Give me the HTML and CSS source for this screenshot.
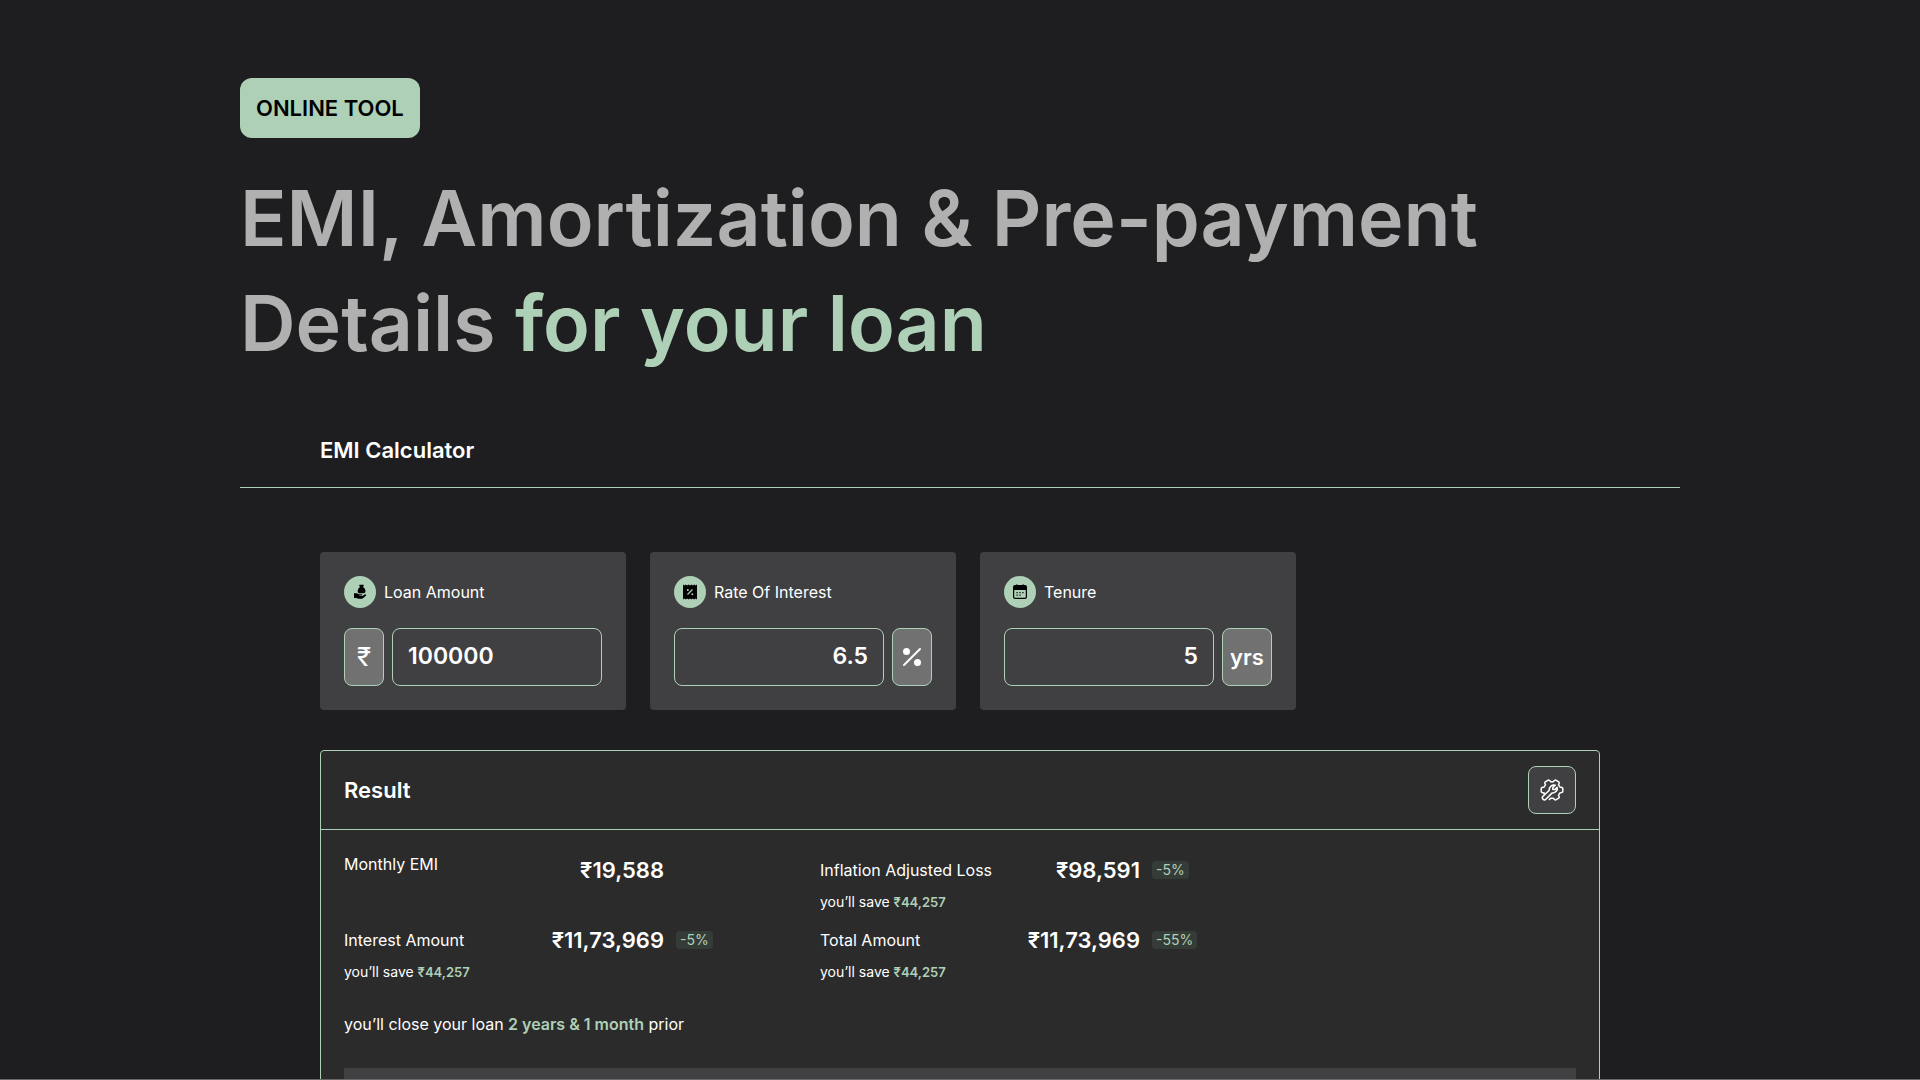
FILE: index.html
```html
<!DOCTYPE html>
<html lang="en">
<head>
  <meta charset="UTF-8">
  <meta name="viewport" content="width=device-width, initial-scale=1.0">
  <title>EMI Calculator</title>
  <link rel="stylesheet" href="styles.css">
</head>
<body>
  <main class="page">
    <header class="hero">
      <span class="tag">ONLINE TOOL</span>
      <h1>EMI, Amortization &amp; Pre-payment Details <em>for your loan</em></h1>
    </header>

    <nav class="tabs">
      <a href="#calculator" class="tab">EMI Calculator</a>
    </nav>

    <section class="calculator" id="calculator">
      <form class="inputs">
        <div class="card">
          <label class="card-label" for="amount">
            <span class="icon">
              <svg width="16" height="16" viewBox="0 0 16 16">
                <path d="M7.3.8h4.4v1.3l-.8 1c1.7 1 2.6 2.5 2.6 4 0 1.400-.9 2.200-2.300 2.200H7.800C6.600 9.300 5.700 8.500 5.700 7.200c0-1.600.9-3.100 2.400-4.100l-.8-1z"/>
                <path d="M2 9.200h2.600c1 0 1.600.8 2.600 1.100h2.300c.9 0 .9 1.100 0 1.100H7.300v.5h2.900l2.500-1.500c1-.6 1.900.4 1.200 1.300l-3 2.500c-.4.400-.9.600-1.500.6H7.300c-1.300 0-2-.9-3.200-.9H2z"/>
              </svg>
            </span>
            Loan Amount
          </label>
          <div class="field">
            <span class="unit rupee">₹</span>
            <input type="text" id="amount" value="100000">
          </div>
        </div>

        <div class="card">
          <label class="card-label" for="rate">
            <span class="icon">
              <svg width="16" height="16" viewBox="0 0 16 16">
                <path d="M1 .5l1.400 1L3.800.5l1.400 1L6.600.5 8 1.500 9.400.5l1.400 1L12.200.5l1.400 1L15 .5v15l-1.400-1-1.400 1-1.400-1-1.400 1L8 14.500l-1.400 1-1.400-1-1.400 1-1.400-1-1.400 1z"/>
                <path class="icon-line" d="M5.500 10.500l5-5"/>
                <circle class="icon-dot" cx="5.800" cy="5.900" r="1"/>
                <circle class="icon-dot" cx="10.300" cy="10.200" r="1"/>
              </svg>
            </span>
            Rate Of Interest
          </label>
          <div class="field">
            <input type="text" id="rate" class="right" value="6.5">
            <span class="unit">
              <svg width="20" height="20" viewBox="0 0 20 20">
                <path class="percent-line" d="M2 18L18 2"/>
                <circle cx="4.500" cy="4.500" r="3.500"/>
                <circle cx="15.500" cy="15.500" r="3.500"/>
              </svg>
            </span>
          </div>
        </div>

        <div class="card">
          <label class="card-label" for="tenure">
            <span class="icon">
              <svg width="16" height="16" viewBox="0 0 16 16">
                <path fill-rule="evenodd" d="M3 1h1V.5h1.500V1h5V.5H12V1h1a2 2 0 0 1 2 2v9.500a2.500 2.500 0 0 1-2.500 2.500h-9A2.500 2.500 0 0 1 1 12.500V3a2 2 0 0 1 2-2zM2.200 6v6.500c0 .7.600 1.300 1.300 1.300h9c.7 0 1.300-.6 1.300-1.300V6z"/>
                <path d="M4.500 8h1.200v1.200H4.500zM7.400 8h1.200v1.200H7.400zM10.300 8h1.200v1.200h-1.200zM4.500 10.600h1.200v1.200H4.500zM7.400 10.600h1.200v1.200H7.400z"/>
              </svg>
            </span>
            Tenure
          </label>
          <div class="field">
            <input type="text" id="tenure" class="right" value="5">
            <span class="unit wide">yrs</span>
          </div>
        </div>
      </form>

      <section class="result">
        <div class="result-head">
          <h2>Result</h2>
          <button type="button" class="settings" aria-label="Settings">
            <svg width="24" height="24" viewBox="0 0 24 24">
              <path d="M4 16.500L4.200 15 Q1.200 14.600 1.200 13.500V10.500Q1.200 9.500 4.200 9L5.500 6.700Q4.200 4.500 5.300 3.800L8.200 2.100Q9.200 1.800 10.700 3.700H13.300Q14.800 1.800 15.800 2.100L18.700 3.800Q19.800 4.500 18.500 6.700L19.800 9Q22.800 9.500 22.800 10.500V13.500Q22.800 14.500 19.800 15L18.500 17.300Q19.800 19.500 18.700 20.200L15.800 21.900Q14.800 22.200 13.300 20.300H10.700L9 21.900"/>
              <path d="M9.300 12.200A4.700 4.700 0 0 1 15.300 7.200L12.800 9.400v2h2.200L17.200 9.200A4.600 4.600 0 0 1 12.200 14.900L5.900 21.200a2 2 0 0 1-2.900-2.900z"/>
            </svg>
          </button>
        </div>

        <div class="result-body">
          <div class="stats">
            <div class="stat">
              <span class="stat-label top">Monthly EMI</span>
              <strong class="stat-value">₹19,588</strong>
            </div>
            <div class="stat">
              <span class="stat-label">Inflation Adjusted Loss</span>
              <strong class="stat-value">₹98,591</strong>
              <span class="change">-5%</span>
              <p class="save">you’ll save <b>₹44,257</b></p>
            </div>
            <div class="stat">
              <span class="stat-label">Interest Amount</span>
              <strong class="stat-value">₹11,73,969</strong>
              <span class="change">-5%</span>
              <p class="save">you’ll save <b>₹44,257</b></p>
            </div>
            <div class="stat">
              <span class="stat-label">Total Amount</span>
              <strong class="stat-value">₹11,73,969</strong>
              <span class="change">-55%</span>
              <p class="save">you’ll save <b>₹44,257</b></p>
            </div>
          </div>
          <p class="summary">you’ll close your loan <b>2 years &amp; 1 month</b> prior</p>
          <div class="chart"></div>
        </div>
      </section>
    </section>
  </main>
</body>
</html>
```

FILE: styles.css
```css
:root {
  --bg: #1e1e20;
  --panel: #2b2b2b;
  --card: #404042;
  --unit: #717171;
  --green: #aed0b7;
  --grey: #b0b0b0;
}
* { box-sizing: border-box; margin: 0; padding: 0; }
body {
  font-family: Inter, "Noto Sans", sans-serif;
  font-size: 16px;
  line-height: 24px;
  color: #fff;
  background: var(--bg);
}
.page {
  height: 100vh;
  padding: 78px 240px 0;
  overflow: hidden;
  border-bottom: 1px solid #6c696b;
}

/* Hero */
.hero {
  display: flex;
  flex-direction: column;
  align-items: flex-start;
  gap: 28px;
}
.tag {
  padding: 0 16px;
  border-radius: 12px;
  background: var(--green);
  color: #000;
  font-size: 22px;
  font-weight: 600;
  line-height: 60px;
}
h1 {
  color: var(--grey);
  font-size: 77px;
  font-weight: 600;
  line-height: 105px;
}
h1 em {
  color: var(--green);
  font-style: normal;
}

/* Tabs */
.tabs {
  margin-top: 44px;
  padding: 14px 80px 21px;
  border-bottom: 1px solid var(--green);
}
.tab {
  display: inline-block;
  color: #fff;
  font-size: 22px;
  font-weight: 600;
  line-height: 32px;
  text-decoration: none;
}

/* Input cards */
.calculator { padding: 64px 80px 0; }
.inputs {
  display: flex;
  gap: 24px;
  margin-bottom: 40px;
}
.card {
  padding: 24px;
  border-radius: 4px;
  background: var(--card);
}
.card-label {
  display: flex;
  align-items: center;
  gap: 8px;
  margin-bottom: 20px;
}
.icon {
  display: flex;
  align-items: center;
  justify-content: center;
  width: 32px;
  height: 32px;
  border-radius: 50%;
  background: var(--green);
}
.icon-line {
  stroke: var(--green);
  stroke-width: 1.2;
}
.icon-dot { fill: var(--green); }
.field {
  display: flex;
  gap: 8px;
  height: 58px;
}
.field input {
  width: 210px;
  padding: 0 15px 2px;
  border: 1px solid var(--green);
  border-radius: 8px;
  background: transparent;
  color: #fff;
  font: 600 23px Inter, sans-serif;
}
.field .right { text-align: right; }
.unit {
  display: flex;
  align-items: center;
  justify-content: center;
  width: 40px;
  border: 1px solid var(--green);
  border-radius: 8px;
  background: var(--unit);
  font-size: 22px;
  font-weight: 600;
}
.unit svg { fill: #fff; }
.percent-line {
  stroke: #fff;
  stroke-width: 2;
  stroke-linecap: round;
}
.rupee {
  font-size: 26px;
  font-weight: 400;
}
.wide { width: 50px; }

/* Result */
.result {
  border: 1px solid var(--green);
  border-radius: 4px;
  background: var(--panel);
}
.result-head {
  display: flex;
  align-items: center;
  justify-content: space-between;
  padding: 15px 23px;
  border-bottom: 1px solid var(--green);
}
h2 {
  font-size: 22px;
  font-weight: 600;
}
.settings {
  display: flex;
  align-items: center;
  justify-content: center;
  width: 48px;
  height: 48px;
  border: 1px solid var(--green);
  border-radius: 8px;
  background: var(--card);
  cursor: pointer;
}
.settings path {
  fill: none;
  stroke: #fff;
  stroke-width: 1.5;
  stroke-linejoin: round;
}
.result-body { padding: 24px 23px; }
.stats {
  display: grid;
  grid-template-columns: 476px 476px;
  row-gap: 10px;
}
.stat {
  display: grid;
  grid-template-columns: 172px 136px auto;
  grid-template-rows: 32px 24px;
  gap: 4px 12px;
  align-items: center;
  justify-content: start;
}
.stat-label { white-space: nowrap; }
.top {
  align-self: start;
  line-height: 20px;
}
.stat-value {
  font-size: 22px;
  font-weight: 600;
  text-align: right;
}
.change {
  padding: 0 4px;
  border-radius: 4px;
  background: #353c37;
  color: var(--green);
  font-size: 14px;
  line-height: 18px;
}
.save {
  grid-column: 1 / -1;
  font-size: 14px;
}
.save b, .summary b {
  color: var(--green);
  font-weight: 600;
}
.save b { font-size: 13px; }
.summary { margin: 28px 0 32px; }
.chart {
  height: 320px;
  background: var(--card);
}
```
